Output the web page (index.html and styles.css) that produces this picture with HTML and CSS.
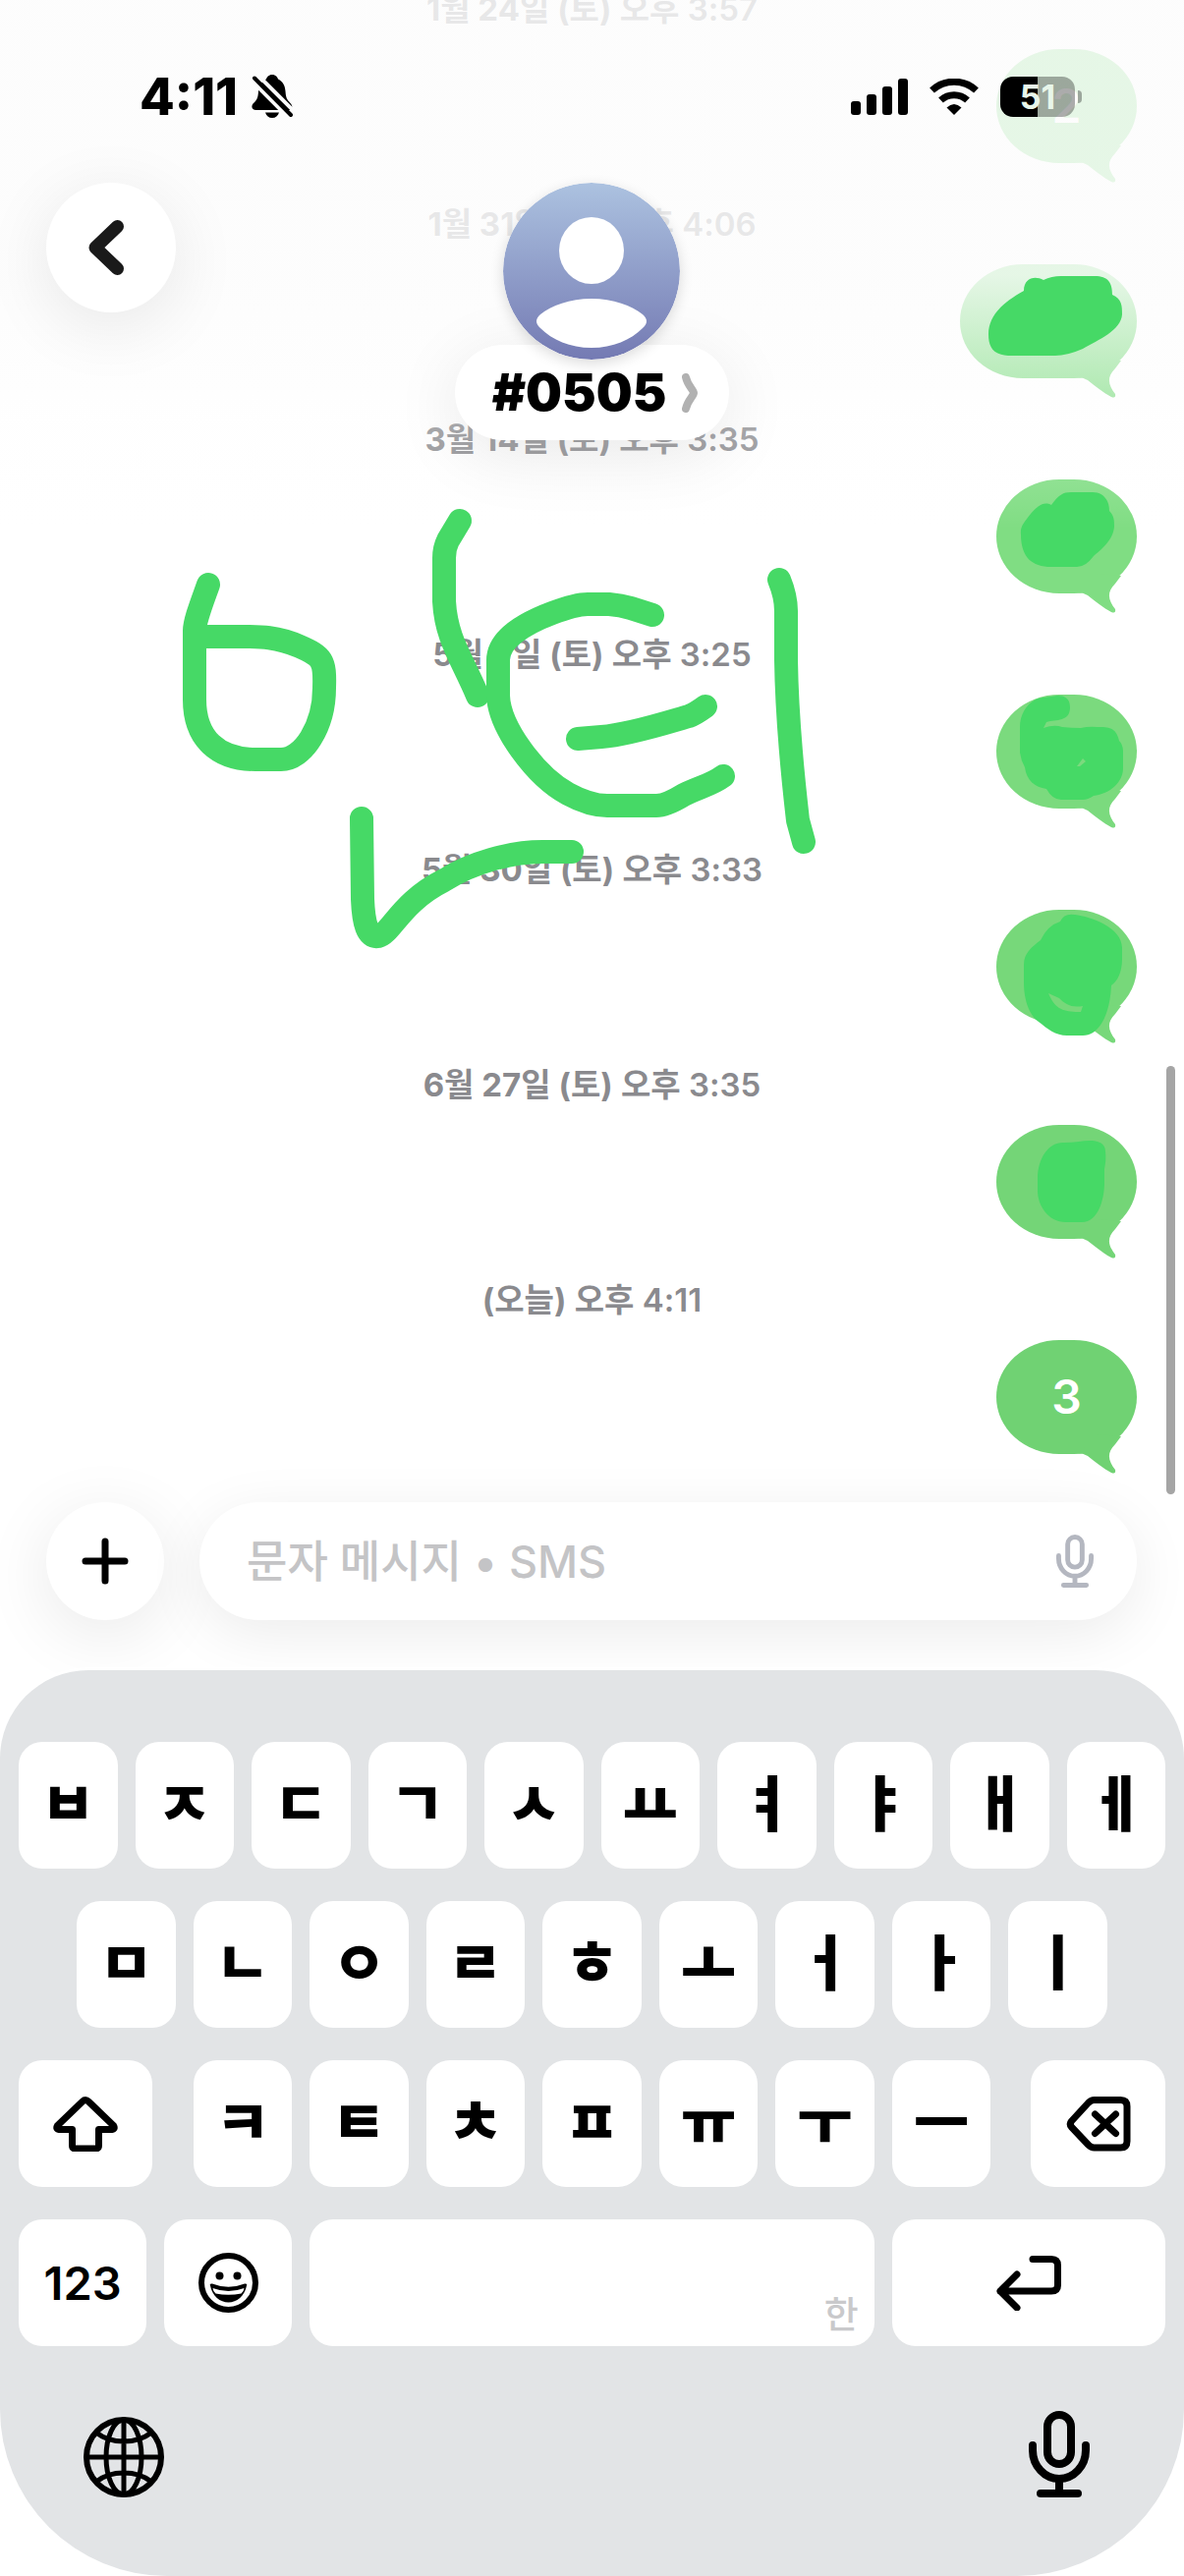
FILE: index.html
```html
<!DOCTYPE html>
<html lang="ko">
<head>
<meta charset="UTF-8">
<meta name="viewport" content="width=device-width, initial-scale=1.0">
<title>#0505</title>
<link rel="stylesheet" href="styles.css">
</head>
<body>
<div class="screen">
    <header class="topbar">
        <div class="status">
            <div class="status-left">
                <span class="time">4:11</span>
                <svg class="icon-bell" viewBox="0 0 42 44" aria-hidden="true">
                    <path d="M21 0C24.500 0 26.500 2.500 27 4.500C32 7 34 11 34.500 17C35 24 36 25 39.500 29C43 33 41 36 37.500 36H4.500C1 36 -1 33 1.500 29.500C5.500 26 6.500 24 7 17C7.500 11 10 7 15 4.500C15.500 2.500 17.500 0 21 0Z"/>
                    <path d="M14 38.500H28C27 42 24.500 44 21 44S15 42 14 38.500Z"/>
                    <path class="gap" d="M-1 5L39 45M5 -1L45 39"/>
                    <path class="slash" d="M3 3.500L40 41"/>
                </svg>
            </div>
            <div class="status-right">
                <svg class="icon-signal" viewBox="0 0 58 37" aria-hidden="true">
                    <rect x="0" y="23" width="10" height="14" rx="3"/>
                    <rect x="16" y="16" width="10" height="21" rx="3"/>
                    <rect x="32" y="8" width="10" height="29" rx="3"/>
                    <rect x="48" y="0" width="10" height="37" rx="3"/>
                </svg>
                <svg class="icon-wifi" viewBox="0 0 50 37" aria-hidden="true">
                    <path class="arc" d="M2.500 12A33 33 0 0 1 47.500 12"/>
                    <path class="arc" d="M11.500 22A20 20 0 0 1 38.500 22"/>
                    <path d="M25 37L17.500 29.500Q25 22.500 32.500 29.500Z"/>
                </svg>
                <div class="battery">51</div>
            </div>
        </div>
        <div class="nav">
            <button class="round back" aria-label="뒤로">
                <svg viewBox="0 0 36 56"><path d="M29.500 6.500L7 28L29.500 49.500"/></svg>
            </button>
            <div class="contact">
                <svg class="avatar" viewBox="0 0 180 180" aria-hidden="true">
                    <defs>
                        <linearGradient id="sky" x1="0" y1="0" x2="0" y2="1">
                            <stop offset="0" stop-color="#acc2e0"/>
                            <stop offset="1" stop-color="#747ab3"/>
                        </linearGradient>
                    </defs>
                    <circle cx="90" cy="90" r="90" fill="url(#sky)"/>
                    <ellipse cx="90" cy="69" rx="33" ry="34" fill="#fff"/>
                    <path d="M90 118C112 118 131 125 142 134Q150 141 142 148C130 160 112 168 90 168S50 160 38 148Q30 141 38 134C49 125 68 118 90 118Z" fill="#fff"/>
                </svg>
                <a class="name" href="#info">#0505
                    <svg viewBox="0 0 16 40" aria-hidden="true"><path d="M4 4C6 13 12 17 12 20S6 27 4 36"/></svg>
                </a>
            </div>
        </div>
    </header>

    <main class="thread">
        <section class="msg"><time><b>1월 24일 (토)</b> 오후 3:57</time><p class="bubble">2<svg class="tail" viewBox="0 0 44 40"><path d="M0 19Q5 19 10 22C18 28 26 35 34 39Q39 41 38 36C32 28 28 20 38 10L44 2L20 0Z"/></svg></p></section>
        <section class="msg"><time><b>1월 31일 (토)</b> 오후 4:06</time><p class="bubble wide"><svg class="tail" viewBox="0 0 44 40"><path d="M0 19Q5 19 10 22C18 28 26 35 34 39Q39 41 38 36C32 28 28 20 38 10L44 2L20 0Z"/></svg></p></section>
        <section class="msg"><time><b>3월 14일 (토)</b> 오후 3:35</time><p class="bubble"><svg class="tail" viewBox="0 0 44 40"><path d="M0 19Q5 19 10 22C18 28 26 35 34 39Q39 41 38 36C32 28 28 20 38 10L44 2L20 0Z"/></svg></p></section>
        <section class="msg"><time><b>5월 9일 (토)</b> 오후 3:25</time><p class="bubble"><svg class="tail" viewBox="0 0 44 40"><path d="M0 19Q5 19 10 22C18 28 26 35 34 39Q39 41 38 36C32 28 28 20 38 10L44 2L20 0Z"/></svg></p></section>
        <section class="msg"><time><b>5월 30일 (토)</b> 오후 3:33</time><p class="bubble"><svg class="tail" viewBox="0 0 44 40"><path d="M0 19Q5 19 10 22C18 28 26 35 34 39Q39 41 38 36C32 28 28 20 38 10L44 2L20 0Z"/></svg></p></section>
        <section class="msg"><time><b>6월 27일 (토)</b> 오후 3:35</time><p class="bubble"><svg class="tail" viewBox="0 0 44 40"><path d="M0 19Q5 19 10 22C18 28 26 35 34 39Q39 41 38 36C32 28 28 20 38 10L44 2L20 0Z"/></svg></p></section>
        <section class="msg"><time><b>(오늘)</b> 오후 4:11</time><p class="bubble">3<svg class="tail" viewBox="0 0 44 40"><path d="M0 19Q5 19 10 22C18 28 26 35 34 39Q39 41 38 36C32 28 28 20 38 10L44 2L20 0Z"/></svg></p></section>
    </main>

    <!-- pen marks over the chat -->
    <svg class="marker" viewBox="0 0 1205 1529" aria-hidden="true">
        <g class="pen">
            <path d="M212 595C206 612 198 632 198 642V712C198 752 222 773 260 773H286C308 773 330 740 330 700C331 672 328 668 305 658C282 648 265 648 246 648H212"/>
            <path d="M468 530L456 550Q452 558 452 568V612C454 650 470 670 486 708"/>
            <path d="M664 626L642 619Q632 616 620 615H598Q586 615 562 624C530 636 507 652 507 672V708C508 740 545 790 578 808Q600 820 618 820H668Q678 820 696 809C712 801 724 799 736 790"/>
            <path d="M588 752L612 750C640 748 680 735 701 729Q707 727 718 719"/>
            <path d="M793 590Q800 607 800 622V672C801 740 808 800 812 835L818 857"/>
            <path d="M368 833L369 915C370 940 374 955 385 953C398 950 408 918 452 896C480 878 520 867 552 867H582"/>
        </g>
        <g class="blob">
            <path d="M1006 340C1006 322 1020 308 1042 296C1042 283 1053 280 1062 285Q1070 281 1080 281H1114C1128 281 1132 288 1132 300C1142 304 1142 312 1142 320C1141 336 1118 346 1102 355Q1086 362 1074 362H1030C1012 362 1006 355 1006 340Z"/>
            <path d="M1039 544C1038 536 1042 532 1049 523C1056 515 1062 510 1070 514C1076 506 1080 501 1090 501H1112C1122 501 1129 508 1129 520C1134 525 1134 530 1134 536C1133 550 1120 560 1113 566Q1105 577 1096 577H1070C1050 577 1039 567 1039 544Z"/>
            <path fill-rule="evenodd" d="M1089 720C1089 711 1084 708 1076 708C1068 710 1060 709 1054 712C1044 717 1038 728 1038 740V766Q1039 774 1043 781C1045 795 1053 801 1065 803Q1071 814 1080 814H1102Q1107 814 1113 810C1130 808 1143 796 1143 782V765Q1143 758 1139 754C1136 740 1128 740 1117 740Q1108 739 1100 741Q1090 741 1081 740Q1073 737 1062 741L1065 735C1075 732 1089 735 1089 720ZM1096 780L1102 772L1105 775L1099 780Z"/>
            <path fill-rule="evenodd" d="M1042 982C1042 970 1050 964 1059 957Q1066 942 1079 938Q1083 929 1094 931C1110 933 1143 944 1142 966V976C1142 990 1137 999 1131 1003C1130 1028 1121 1054 1102 1054H1086C1074 1054 1066 1047 1057 1040C1046 1032 1042 1015 1042 1000ZM1067 1011C1074 1028 1083 1030 1100 1030L1102 1024C1090 1026 1084 1022 1078 1016Z"/>
            <path d="M1056 1200C1056 1178 1068 1162 1083 1163Q1090 1163 1098 1162C1110 1160 1125 1160 1125 1172Q1126 1180 1124 1190V1204C1124 1220 1118 1244 1101 1244H1085C1066 1244 1056 1226 1056 1212Z"/>
        </g>
    </svg>
    <div class="scrollbar"></div>

    <form class="composer">
        <button type="button" class="round add" aria-label="추가">
            <svg viewBox="0 0 48 48"><path d="M24 4V44M4 24H44"/></svg>
        </button>
        <div class="field">
            <input type="text" id="message" aria-label="문자 메시지" placeholder="문자 메시지 • SMS">
            <button type="button" class="mic" aria-label="받아쓰기">
                <svg viewBox="0 0 62 88"><rect x="19" y="4" width="24" height="50" rx="12"/><path d="M4 35V40A27 29 0 0 0 58 40V35M31 70V84M12 84H50"/></svg>
            </button>
        </div>
    </form>

    <div class="keyboard">
        <div class="row">
            <button class="key">ㅂ</button>
            <button class="key">ㅈ</button>
            <button class="key">ㄷ</button>
            <button class="key">ㄱ</button>
            <button class="key">ㅅ</button>
            <button class="key">ㅛ</button>
            <button class="key">ㅕ</button>
            <button class="key">ㅑ</button>
            <button class="key">ㅐ</button>
            <button class="key">ㅔ</button>
        </div>
        <div class="row row-home">
            <button class="key">ㅁ</button>
            <button class="key">ㄴ</button>
            <button class="key">ㅇ</button>
            <button class="key">ㄹ</button>
            <button class="key">ㅎ</button>
            <button class="key">ㅗ</button>
            <button class="key">ㅓ</button>
            <button class="key">ㅏ</button>
            <button class="key">ㅣ</button>
        </div>
        <div class="row">
            <button class="key shift" aria-label="Shift">
                <svg viewBox="0 0 65 56"><path d="M32.500 3.500Q34 3.500 35.500 5L61 29.500Q63 33 59.500 33.500H46V49.500Q46 53 42.500 53H22.500Q19 53 19 49.500V33.500H5.500Q2 33 4 29.500L29.500 5Q31 3.500 32.500 3.500Z"/></svg>
            </button>
            <button class="key">ㅋ</button>
            <button class="key">ㅌ</button>
            <button class="key">ㅊ</button>
            <button class="key">ㅍ</button>
            <button class="key">ㅠ</button>
            <button class="key">ㅜ</button>
            <button class="key">ㅡ</button>
            <button class="key delete" aria-label="삭제">
                <svg viewBox="0 0 65 56"><path d="M28 3.500H55Q61.500 3.500 61.500 10V45.500Q61.500 52 55 52H28Q25 52 22 49L5 31Q2.500 28 5 25L22 6.500Q25 3.500 28 3.500ZM29 18L50 37.500M50 18L29 37.500"/></svg>
            </button>
        </div>
        <div class="row">
            <div class="pair">
                <button class="key numbers">123</button>
                <button class="key" aria-label="이모티콘">
                    <svg viewBox="0 0 61 61"><circle cx="30.500" cy="30.500" r="27.500"/><circle class="solid" cx="21.500" cy="23.500" r="4"/><circle class="solid" cx="39.500" cy="23.500" r="4"/><path class="solid" d="M12 33.500Q11 31 14 31.500Q30.500 38 47 31.500Q50 31 49 33.500C47 44 39 50.500 30.500 50.500S14 44 12 33.500Z"/><path class="teeth" d="M14.500 36Q30.500 42 46.500 36Q46 40 43.500 41.500Q30.500 44 17.500 41.500Q15 40 14.500 36Z"/></svg>
                </button>
            </div>
            <button class="key space">한</button>
            <button class="key return" aria-label="줄바꿈">
                <svg viewBox="0 0 66 56"><path d="M37 3.500H56Q62.500 3.500 62.500 10V30Q62.500 36 56 36H4M21 19L4 36L21 53"/></svg>
            </button>
        </div>
        <div class="tools">
            <button class="tool" aria-label="키보드 전환">
                <svg class="globe" viewBox="0 0 82 82"><circle class="rim" cx="41" cy="41" r="38"/><path d="M41 3V79M3 41H79M13 16C28 28 54 28 69 16M13 66C28 54 54 54 69 66"/><ellipse cx="41" cy="41" rx="18" ry="38"/></svg>
            </button>
            <button class="tool" aria-label="받아쓰기">
                <svg class="dictate" viewBox="0 0 62 88"><rect x="19" y="4" width="24" height="50" rx="12"/><path d="M4 35V40A27 29 0 0 0 58 40V35M31 70V84M12 84H50"/></svg>
            </button>
        </div>
    </div>
</div>
</body>
</html>
```

FILE: styles.css
```css
* {
    box-sizing: border-box;
}
body {
    margin: 0;
    background-color: #ffffff;
    color: #000000;
    font-family: Inter, "Noto Sans CJK KR", sans-serif;
}
button {
    padding: 0;
    border: 0;
    background: none;
    color: inherit;
    font-family: inherit;
    cursor: pointer;
}
svg {
    display: block;
}
.screen {
    position: relative;
    display: flex;
    flex-direction: column;
    min-height: 100vh;
    overflow: hidden;
}

/* top bar lies over the scrolled chat */
.topbar {
    position: absolute;
    top: 0;
    left: 0;
    right: 0;
    z-index: 2;
    padding: 68px 47px 90px;
    background: linear-gradient(rgba(252, 252, 252, 0.82) 0, rgba(252, 252, 252, 0.82) 52%, rgba(253, 253, 253, 0.25) 82%, rgba(255, 255, 255, 0) 100%);
}
.status {
    display: flex;
    justify-content: space-between;
    align-items: center;
    height: 60px;
    padding: 0 64px 0 95px;
}
.status-left,
.status-right {
    display: flex;
    align-items: center;
}
.status-left {
    gap: 14px;
}
.status-right {
    gap: 22px;
}
.time {
    font-size: 52px;
    font-weight: 800;
}
.icon-bell {
    width: 42px;
    height: 44px;
}
.icon-bell .gap {
    fill: none;
    stroke: #fcfcfc;
    stroke-width: 4;
}
.icon-bell .slash {
    fill: none;
    stroke: #000000;
    stroke-width: 4;
    stroke-linecap: round;
}
.icon-signal {
    width: 58px;
    height: 37px;
}
.icon-wifi {
    width: 50px;
    height: 37px;
}
.icon-wifi .arc {
    fill: none;
    stroke: #000000;
    stroke-width: 7;
}
.battery {
    position: relative;
    width: 76px;
    height: 41px;
    border-radius: 13px;
    background: linear-gradient(90deg, #000000 50%, rgba(0, 0, 0, 0.32) 50%);
    color: #e8f6ea;
    font-size: 34px;
    font-weight: 700;
    line-height: 41px;
    text-align: center;
}
.battery::after {
    content: "";
    position: absolute;
    top: 14px;
    right: -7px;
    width: 4px;
    height: 13px;
    border-radius: 0 6px 6px 0;
    background-color: rgba(0, 0, 0, 0.32);
}
.nav {
    display: grid;
    grid-template-columns: 1fr auto 1fr;
    align-items: start;
    padding-top: 58px;
}
.round {
    display: flex;
    align-items: center;
    justify-content: center;
    border-radius: 50%;
    background-color: #ffffff;
    box-shadow: 0 14px 70px rgba(0, 0, 0, 0.09);
}
.round svg {
    fill: none;
    stroke: #000000;
    stroke-linecap: round;
    stroke-linejoin: round;
}
.back {
    width: 132px;
    height: 132px;
}
.back svg {
    width: 36px;
    height: 56px;
    margin-right: 10px;
    stroke: #1a1a1a;
    stroke-width: 13;
}
.contact {
    display: flex;
    flex-direction: column;
    align-items: center;
}
.avatar {
    position: relative;
    z-index: 1;
    width: 180px;
    height: 180px;
    border-radius: 50%;
    box-shadow: 0 4px 14px rgba(0, 0, 0, 0.14);
}
.name {
    display: flex;
    align-items: center;
    gap: 16px;
    height: 97px;
    margin-top: -15px;
    padding: 0 32px 0 38px;
    border-radius: 49px;
    background-color: #ffffff;
    box-shadow: 0 14px 70px rgba(0, 0, 0, 0.09);
    color: #000000;
    font-size: 52px;
    font-weight: 900;
    text-decoration: none;
}
.name svg {
    width: 16px;
    height: 40px;
    fill: none;
    stroke: #b1b1b1;
    stroke-width: 8;
    stroke-linecap: round;
    stroke-linejoin: round;
}

.thread {
    margin-top: -11px;
    padding: 0 48px;
}
.msg {
    --tone: #7bda7e;
    display: flex;
    flex-direction: column;
    height: 219px;
}
.msg:nth-child(-n+3) {
    --tone: #80dd83;
}
.msg:nth-child(n+5) {
    --tone: #77d87a;
}
.msg:nth-child(n+6) {
    --tone: #74d577;
}
.msg:nth-child(7) {
    --tone: #70d273;
}
.msg time {
    color: #8a8a8e;
    font-size: 33px;
    font-weight: 600;
    line-height: 40px;
    text-align: center;
}
.msg b {
    font-weight: 700;
}
.bubble {
    position: relative;
    align-self: flex-end;
    width: 143px;
    height: 116px;
    margin: 21px 0 0;
    border-radius: 64px / 58px;
    background-color: var(--tone);
    color: #ffffff;
    font-size: 48px;
    font-weight: 600;
    line-height: 116px;
    text-align: center;
}
.wide {
    width: 180px;
}
.tail {
    position: absolute;
    right: 16px;
    bottom: -20px;
    width: 44px;
    height: 40px;
    fill: var(--tone);
}

.marker {
    position: absolute;
    top: 0;
    left: 0;
    z-index: 3;
    width: 100%;
    pointer-events: none;
}
.marker .pen {
    fill: none;
    stroke: #46d966;
    stroke-width: 24;
    stroke-linecap: round;
    stroke-linejoin: round;
}
.marker .blob {
    fill: #46d966;
}
.scrollbar {
    position: absolute;
    top: 1085px;
    right: 9px;
    width: 9px;
    height: 436px;
    border-radius: 5px;
    background-color: #a5a5a5;
}

.composer {
    display: flex;
    gap: 36px;
    padding: 7px 48px 51px 47px;
}
.add {
    flex: none;
    width: 120px;
    height: 120px;
}
.add svg {
    width: 48px;
    height: 48px;
    stroke-width: 7;
}
.field {
    flex: 1;
    display: flex;
    align-items: center;
    height: 120px;
    padding: 0 44px 0 48px;
    border-radius: 60px;
    background-color: #ffffff;
    box-shadow: 0 14px 60px rgba(0, 0, 0, 0.08);
}
.field input {
    flex: 1;
    min-width: 0;
    border: 0;
    outline: 0;
    padding: 0;
    background: none;
    font-family: inherit;
    font-size: 45px;
    font-weight: 500;
}
.field input::placeholder {
    color: #c4c4c6;
    opacity: 1;
}
.mic svg,
.dictate {
    fill: none;
    stroke: #000000;
    stroke-width: 8;
    stroke-linecap: round;
    stroke-linejoin: round;
}
.mic svg {
    width: 38px;
    height: 54px;
    stroke: #b4b7c0;
}

.keyboard {
    position: relative;
    flex: 1;
    display: flex;
    flex-direction: column;
    gap: 33px;
    padding: 73px 19px 79px;
    border-radius: 90px 90px 170px 170px;
    background-color: #e2e4e6;
    box-shadow: 0 -3px 0 rgba(255, 255, 255, 0.8);
}
.row {
    display: grid;
    grid-template-columns: repeat(20, 1fr);
    column-gap: 18px;
}
.key {
    grid-column: span 2;
    display: flex;
    align-items: center;
    justify-content: center;
    height: 129px;
    border-radius: 24px;
    background-color: #ffffff;
    font-size: 61px;
    font-weight: 900;
    line-height: 1;
}
.row-home .key:first-child {
    grid-column: 2 / span 2;
}
.key svg {
    width: 66px;
    height: 56px;
    fill: none;
    stroke: #000000;
    stroke-width: 7;
    stroke-linecap: round;
    stroke-linejoin: round;
}
.row .shift {
    grid-column: span 3;
    margin-right: 24px;
}
.row .delete {
    grid-column: span 3;
    margin-left: 23px;
}
.pair {
    grid-column: span 5;
    display: flex;
    gap: 18px;
}
.pair .key {
    flex: 1;
}
.pair svg {
    width: 61px;
    height: 61px;
    stroke-width: 6;
}
.pair .solid {
    fill: #000000;
    stroke: none;
}
.pair .teeth {
    fill: #ffffff;
    stroke: none;
}
.pair .numbers {
    font-size: 47px;
    font-weight: 600;
}
.space {
    grid-column: span 10;
    align-items: flex-end;
    justify-content: flex-end;
    padding: 0 16px 14px;
    color: #c9c9cb;
    font-size: 38px;
    font-weight: 500;
}
.return {
    grid-column: span 5;
}
.tools {
    display: flex;
    align-items: flex-end;
    justify-content: space-between;
    padding: 33px 77px 0 66px;
}
.globe {
    width: 82px;
    height: 82px;
    fill: none;
    stroke: #000000;
    stroke-width: 5;
}
.globe .rim {
    stroke-width: 6;
}
.dictate {
    width: 62px;
    height: 88px;
}
```
